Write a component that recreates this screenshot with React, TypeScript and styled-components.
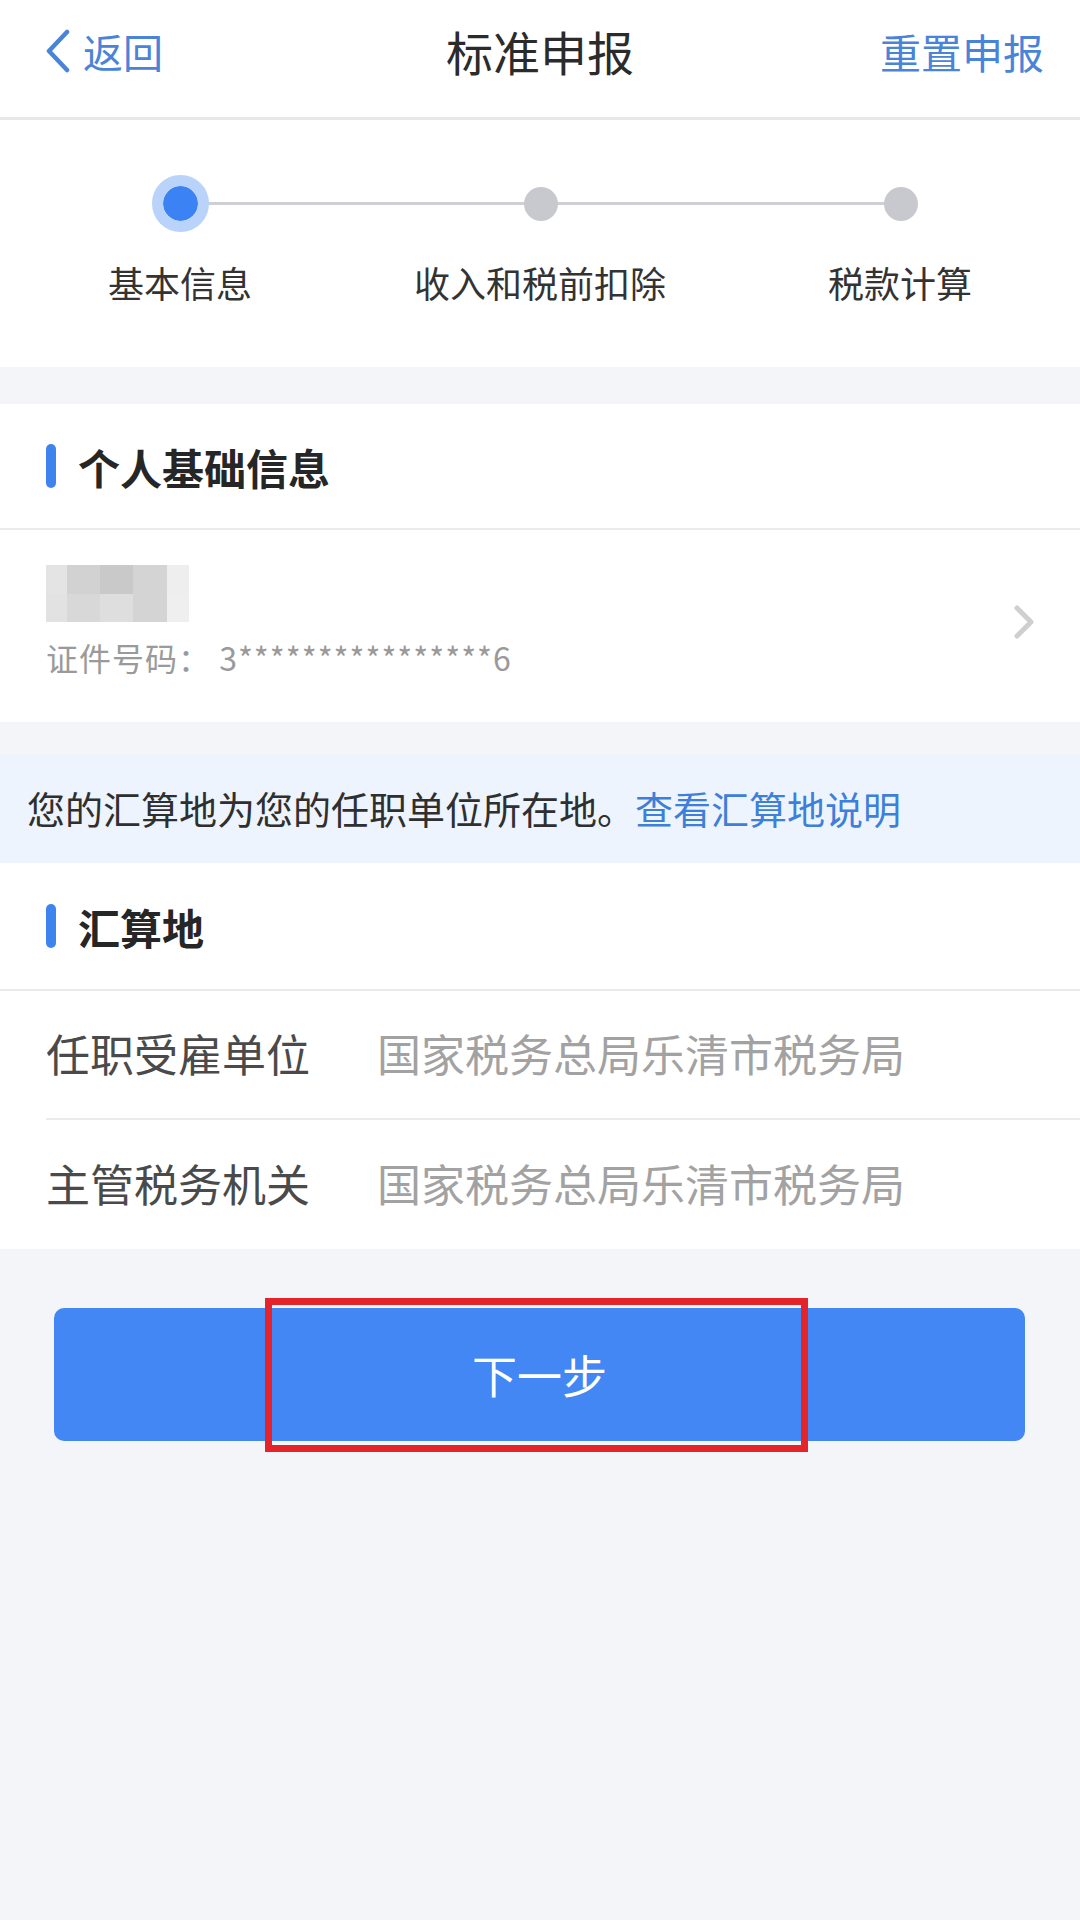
import { createGlobalStyle, styled } from "styled-components";

const GlobalStyle = createGlobalStyle`
  html, body {
    margin: 0;
    padding: 0;
    background-color: #f4f5f9;
    font-family: "Noto Sans CJK SC", "Noto Sans", sans-serif;
  }
  * {
    box-sizing: border-box;
  }
`;

const Page = styled.div`
  width: 1080px;
  min-height: 1920px;
  background-color: #f4f5f9;
  display: flex;
  flex-direction: column;
`;

const Header = styled.header`
  height: 120px;
  background-color: #fff;
  border-bottom: 3px solid #e8e8ea;
  display: grid;
  grid-template-columns: 1fr auto 1fr;
  align-items: center;
  padding: 0 36px 16px;
`;

const BackButton = styled.div`
  display: flex;
  align-items: center;
  gap: 12px;
  padding-left: 9px;
  color: #4a84d8;
  font-size: 40px;
  line-height: 1;
`;

const Title = styled.h1`
  margin: 0;
  font-size: 47px;
  font-weight: 400;
  color: #2b2b2b;
`;

const HeaderAction = styled.div`
  justify-self: end;
  color: #4a84d8;
  font-size: 41px;
`;

const StepsPanel = styled.section`
  background-color: #fff;
  padding: 55px 0 58px;
`;

const StepTrack = styled.div`
  margin: 0 151px 0 152px;
  display: flex;
  justify-content: space-between;
  align-items: center;
  background: linear-gradient(#cfd0d4, #cfd0d4) center / calc(100% - 57px) 3px no-repeat;
`;

const DotSlot = styled.div`
  width: 57px;
  height: 57px;
  display: flex;
  align-items: center;
  justify-content: center;
`;

const Dot = styled.span<{ $active?: boolean }>`
  width: ${(p) => (p.$active ? "57px" : "34px")};
  height: ${(p) => (p.$active ? "57px" : "34px")};
  border-radius: 50%;
  background-color: ${(p) => (p.$active ? "#3b82f4" : "#c8c9ce")};
  border: ${(p) => (p.$active ? "11px solid #b9d3fa" : "none")};
  background-clip: padding-box;
`;

const StepLabels = styled.div`
  display: grid;
  grid-template-columns: repeat(3, 360px);
  margin-top: 23px;
`;

const StepLabel = styled.div`
  text-align: center;
  font-size: 36px;
  line-height: 54px;
  color: #333;
`;

const Card = styled.section<{ $gap: number }>`
  margin-top: ${(p) => p.$gap}px;
  background-color: #fff;
`;

const SectionHeader = styled.div<{ $height: number }>`
  height: ${(p) => p.$height}px;
  display: flex;
  align-items: center;
  gap: 22px;
  padding-left: 46px;
  border-bottom: 2px solid #ebebed;
`;

const SectionBar = styled.span`
  width: 10px;
  height: 44px;
  border-radius: 5px;
  background-color: #3e84ef;
`;

const SectionTitle = styled.h2`
  margin: 0;
  font-size: 42px;
  font-weight: 700;
  color: #262626;
`;

const PersonRow = styled.div`
  height: 192px;
  display: flex;
  align-items: center;
  justify-content: space-between;
  padding: 0 45px 0 46px;
`;

const PersonInfo = styled.div`
  display: flex;
  flex-direction: column;
  gap: 14px;
  margin-bottom: 9px;
`;

const IdText = styled.div`
  font-size: 32px;
  line-height: 42px;
  letter-spacing: 1px;
  color: #9a9a9a;
`;

const ChevronBox = styled.div`
  display: flex;
  margin-bottom: 8px;
`;

const Notice = styled.div`
  margin-top: 33px;
  height: 108px;
  background-color: #edf4fd;
  display: flex;
  align-items: center;
  padding: 0 0 4px 27px;
  font-size: 38px;
  color: #2f2f2f;
`;

const NoticeLink = styled.span`
  color: #3d7fd9;
`;

const FieldList = styled.div`
  padding-left: 46px;
`;

const FieldRow = styled.div<{ $last?: boolean }>`
  height: 129px;
  display: flex;
  align-items: center;
  padding-bottom: 4px;
  border-bottom: ${(p) => (p.$last ? "none" : "2px solid #ebebed")};
  font-size: 44px;
`;

const FieldLabel = styled.span`
  width: 331px;
  color: #4a4a4a;
`;

const FieldValue = styled.span`
  color: #a2a2a2;
`;

const ButtonWrap = styled.div`
  position: relative;
  margin: 59px 55px 0 54px;
`;

const NextButton = styled.button`
  width: 100%;
  height: 133px;
  border: none;
  border-radius: 10px;
  background-color: #4287f3;
  color: #fff;
  font-family: inherit;
  font-size: 45px;
`;

const Highlight = styled.div`
  position: absolute;
  left: 211px;
  top: -10px;
  width: 543px;
  height: 154px;
  border: 7px solid #e5232a;
  pointer-events: none;
`;

const mosaic = [
  ["#e4e4e4", "#d2d2d2", "#c9c9c9", "#d4d4d4", "#eeeeee"],
  ["#e2e2e2", "#d8d8d8", "#dedede", "#d4d4d4", "#efefef"],
];
const mosaicCols = [0, 21, 54, 87, 121, 143];

const NameMosaic = () => (
  <svg width="143" height="57" viewBox="0 0 143 57">
    {mosaic.map((row, r) =>
      row.map((c, i) => (
        <rect
          key={`${r}-${i}`}
          x={mosaicCols[i]}
          y={r * 29}
          width={mosaicCols[i + 1] - mosaicCols[i]}
          height={r === 0 ? 29 : 28}
          fill={c}
        />
      ))
    )}
  </svg>
);

const BackChevron = () => (
  <svg width="26" height="44" viewBox="0 0 26 44">
    <path d="M22 3 L4 22 L22 41" fill="none" stroke="#4a84d8" strokeWidth="4.5" strokeLinecap="round" strokeLinejoin="round" />
  </svg>
);

const RightChevron = () => (
  <svg width="22" height="34" viewBox="0 0 22 34">
    <path d="M4 3 L18 17 L4 31" fill="none" stroke="#cfcfcf" strokeWidth="5" strokeLinecap="round" strokeLinejoin="round" />
  </svg>
);

const steps = ["基本信息", "收入和税前扣除", "税款计算"];

export default function App() {
  return (
    <Page>
      <GlobalStyle />
      <Header>
        <BackButton>
          <BackChevron />
          返回
        </BackButton>
        <Title>标准申报</Title>
        <HeaderAction>重置申报</HeaderAction>
      </Header>

      <StepsPanel>
        <StepTrack>
          {steps.map((s, i) => (
            <DotSlot key={s}>
              <Dot $active={i === 0} />
            </DotSlot>
          ))}
        </StepTrack>
        <StepLabels>
          {steps.map((s) => (
            <StepLabel key={s}>{s}</StepLabel>
          ))}
        </StepLabels>
      </StepsPanel>

      <Card $gap={37}>
        <SectionHeader $height={126}>
          <SectionBar />
          <SectionTitle>个人基础信息</SectionTitle>
        </SectionHeader>
        <PersonRow>
          <PersonInfo>
            <NameMosaic />
            <IdText>证件号码： 3****************6</IdText>
          </PersonInfo>
          <ChevronBox>
            <RightChevron />
          </ChevronBox>
        </PersonRow>
      </Card>

      <Notice>
        您的汇算地为您的任职单位所在地。<NoticeLink>查看汇算地说明</NoticeLink>
      </Notice>

      <Card $gap={0}>
        <SectionHeader $height={128}>
          <SectionBar />
          <SectionTitle>汇算地</SectionTitle>
        </SectionHeader>
        <FieldList>
          <FieldRow>
            <FieldLabel>任职受雇单位</FieldLabel>
            <FieldValue>国家税务总局乐清市税务局</FieldValue>
          </FieldRow>
          <FieldRow $last>
            <FieldLabel>主管税务机关</FieldLabel>
            <FieldValue>国家税务总局乐清市税务局</FieldValue>
          </FieldRow>
        </FieldList>
      </Card>

      <ButtonWrap>
        <NextButton>下一步</NextButton>
        <Highlight />
      </ButtonWrap>
    </Page>
  );
}
